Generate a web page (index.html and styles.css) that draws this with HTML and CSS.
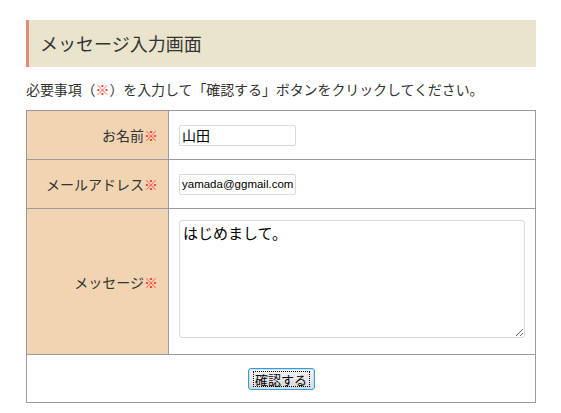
FILE: index.html
```html
<!DOCTYPE html>
<html lang="ja">
<head>
<meta charset="utf-8">
<title>メッセージ入力画面</title>
<link rel="stylesheet" href="styles.css">
</head>
<body>
<div class="page">
  <h1 class="title">メッセージ入力画面</h1>
  <p class="lead">必要事項（<span class="req">※</span>）を入力して「確認する」ボタンをクリックしてください。</p>
  <form class="form">
    <div class="row row-short">
      <div class="label">お名前<span class="req">※</span></div>
      <div class="field"><input class="text" type="text" value="山田"></div>
    </div>
    <div class="row row-short">
      <div class="label">メールアドレス<span class="req">※</span></div>
      <div class="field"><input class="text mail" type="text" value="yamada@ggmail.com"></div>
    </div>
    <div class="row row-tall">
      <div class="label">メッセージ<span class="req">※</span></div>
      <div class="field field-top"><textarea class="area">はじめまして。</textarea></div>
    </div>
    <div class="actions">
      <button class="btn" type="button"><span class="btn-focus">確認する</span></button>
    </div>
  </form>
</div>
</body>
</html>
```
FILE: styles.css
```css
* { box-sizing: border-box; }
html, body { margin: 0; padding: 0; background: #fff; }
body {
  font-family: "Noto Sans CJK JP", "Liberation Sans", sans-serif;
  color: #333;
  font-size: 14px;
}
.page {
  width: 510px;
  margin: 20px 0 0 26px;
}
.title {
  margin: 0;
  height: 47px;
  background: #eae4cc;
  border-left: 3px solid #e08c78;
  padding-left: 11px;
  font-size: 18px;
  font-weight: normal;
  line-height: 47px;
  color: #333;
}
.lead {
  margin: 11px 0 10px;
  line-height: 22px;
  font-size: 14px;
  letter-spacing: -0.1px;
}
.req { color: #ff2a2a; }
.form {
  border: 1px solid #9a9a9a;
}
.row {
  display: grid;
  grid-template-columns: 142px 1fr;
  border-bottom: 1px solid #9a9a9a;
}
.row-short { height: 49px; }
.row-tall { height: 146px; }
.label {
  background: #f1d4b1;
  border-right: 1px solid #9a9a9a;
  display: flex;
  align-items: center;
  justify-content: flex-end;
  padding-right: 10px;
  font-size: 14px;
  color: #333;
}
.field {
  display: flex;
  align-items: center;
  padding: 0 9px 0 10px;
}
.field-top {
  align-items: flex-start;
  padding-top: 11px;
}
.text {
  width: 117px;
  height: 21px;
  border: 1px solid #d6dbe2;
  border-radius: 2px;
  padding: 0 2px;
  font-family: "Noto Sans CJK JP", "Liberation Sans", sans-serif;
  font-size: 14px;
  color: #000;
  outline: none;
}
.text.mail {
  font-family: "Liberation Sans", sans-serif;
  font-size: 11.5px;
  padding: 0 2px;
}
.area {
  width: 346px;
  height: 118px;
  border: 1px solid #d6dbe2;
  border-radius: 3px;
  padding: 3px 3px;
  font-family: "Noto Sans CJK JP", sans-serif;
  font-size: 15px;
  line-height: 18px;
  color: #000;
  outline: none;
}
.actions {
  height: 47px;
  display: flex;
  align-items: center;
  justify-content: center;
}
.btn {
  width: 67px;
  height: 22px;
  margin-top: 1px;
  padding: 2px 4px;
  border: 1px solid #3a9bd5;
  border-radius: 3px;
  background: linear-gradient(#f4f4f4, #e8e8e8 50%, #d6d6d6);
  box-shadow: inset 0 0 0 1px #bfe3f7;
  font-family: "Noto Sans CJK JP", sans-serif;
  font-size: 13px;
  white-space: nowrap;
  color: #000;
  display: flex;
  align-items: stretch;
}
.btn-focus {
  flex: 1;
  border: 1px dotted #000;
  line-height: 15px;
  display: flex;
  align-items: center;
  justify-content: center;
}
```
